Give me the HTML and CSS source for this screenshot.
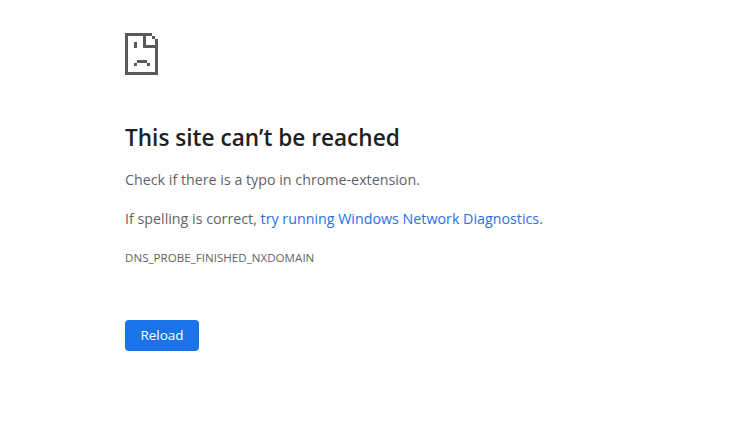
FILE: index.html
```html
<!DOCTYPE html>
<html lang="en">
<head>
<meta charset="utf-8">
<title>chrome-extension</title>
<link rel="stylesheet" href="styles.css">
</head>
<body>
<main class="page">
  <svg class="icon" width="34" height="42" viewBox="0 0 34 42" shape-rendering="crispEdges" aria-hidden="true">
    <path fill="#5a5a5a" fill-rule="evenodd" d="M0 0H27V3H30V6H33V42H0ZM3 3V39H30V15H18V3ZM21 3V12H30V6H27V3Z"/>
    <path fill="#5a5a5a" d="M9 9H12V15H9ZM12 27H22V30H12ZM9 30H12V33H9ZM22 30H25V33H22Z"/>
  </svg>
  <h1 class="title">This site can’t be reached</h1>
  <p class="text">Check if there is a typo in chrome-extension.</p>
  <p class="text">If spelling is correct, <a class="link" href="#">try running Windows Network Diagnostics</a>.</p>
  <div class="code">DNS_PROBE_FINISHED_NXDOMAIN</div>
  <button class="reload" type="button">Reload</button>
</main>
</body>
</html>
```
FILE: styles.css
```css
html, body {
  margin: 0;
  background: #fff;
}
.page {
  display: flex;
  flex-direction: column;
  align-items: flex-start;
  padding: 33px 0 0 125px;
  font-family: "Open Sans", "Noto Sans", sans-serif;
  color: #5f6368;
}
.icon {
  display: block;
  margin-bottom: 48px;
}
.title {
  margin: 0 0 15px;
  font-size: 22.6px;
  line-height: 30px;
  font-weight: 600;
  color: #202124;
}
.text {
  margin: 0 0 16px;
  font-size: 14.28px;
  line-height: 23px;
}
.link {
  color: #2a6fe8;
  text-decoration: none;
}
.code {
  margin-top: 4px;
  font-size: 11.6px;
  line-height: 16px;
  text-transform: uppercase;
}
.reload {
  margin-top: 54px;
  width: 74px;
  height: 31px;
  border: 0;
  border-radius: 4px;
  background: #1a73e8;
  color: #fff;
  font-family: "Open Sans", sans-serif;
  font-size: 13.5px;
  font-weight: 400;
  padding: 0 0 2px;
}
```
